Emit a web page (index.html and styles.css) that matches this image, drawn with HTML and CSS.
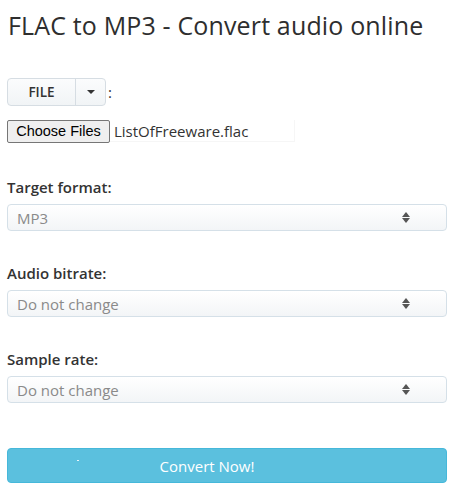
FILE: index.html
```html
<!DOCTYPE html>
<html>
<head>
<meta charset="utf-8">
<link rel="stylesheet" href="styles.css">
</head>
<body>
<div class="page">
  <h1 class="title">FLAC to MP3 - Convert audio online</h1>
  <div class="source-row">
    <div class="btn-group">
      <span class="btn-main">FILE</span>
      <span class="btn-caret"><span class="caret"></span></span>
    </div>
    <span class="colon">:</span>
  </div>
  <div class="file-row">
    <span class="choose">Choose Files</span>
    <span class="file-name">ListOfFreeware.flac</span>
  </div>
  <div class="field first">
    <div class="label">Target format:</div>
    <div class="select"><span class="sel-text">MP3</span><span class="arrows"><span class="up"></span><span class="down"></span></span></div>
  </div>
  <div class="field">
    <div class="label">Audio bitrate:</div>
    <div class="select"><span class="sel-text">Do not change</span><span class="arrows"><span class="up"></span><span class="down"></span></span></div>
  </div>
  <div class="field">
    <div class="label">Sample rate:</div>
    <div class="select"><span class="sel-text">Do not change</span><span class="arrows"><span class="up"></span><span class="down"></span></span></div>
  </div>
  <div class="convert"><span class="dot"></span>Convert Now!</div>
</div>
</body>
</html>
```
FILE: styles.css
```css
html, body { margin: 0; padding: 0; background: #fff; }
body { font-family: "Open Sans", "DejaVu Sans", sans-serif; color: #333; }
.page { width: 440px; padding: 0 0 0 7px; }
.title {
  margin: 0; padding-top: 8px;
  font-size: 25px; font-weight: 400; line-height: 34px;
  color: #2e2e2e; padding-left: 1px; letter-spacing: 0.15px;
}
.source-row { display: flex; align-items: center; margin-top: 36px; height: 28px; }
.btn-group {
  display: flex; height: 28px; box-sizing: border-box;
  border: 1px solid #d6dde3; border-radius: 4px;
  background: linear-gradient(#fbfcfd, #f1f4f6);
}
.btn-main {
  width: 67px; display: flex; align-items: center; justify-content: center;
  font-size: 13.5px; font-weight: 600; color: #333;
  border-right: 1px solid #d6dde3;
}
.btn-caret { width: 29px; display: flex; align-items: center; justify-content: center; }
.caret { width: 0; height: 0; border-left: 4px solid transparent; border-right: 4px solid transparent; border-top: 4px solid #333; }
.colon { margin-left: 2px; font-size: 15px; color: #333; }
.file-row { display: flex; align-items: center; margin-top: 13px; height: 24px; }
.choose {
  box-sizing: border-box; height: 23px; width: 103px;
  display: flex; align-items: center; justify-content: center;
  font-family: "Liberation Sans", Arial, sans-serif; font-size: 14.5px; color: #000;
  background: #efefef; border: 1px solid #767676; border-radius: 2px;
}
.file-name {
  box-sizing: border-box; height: 22px; width: 185px;
  display: flex; align-items: center; padding-left: 4px;
  font-size: 15px; color: #333;
  border-right: 1px solid #f6f6f6; border-bottom: 1px solid #f6f6f6;
}
.field { margin-top: 32px; }
.field.first { margin-top: 34px; }
.label { font-size: 15px; font-weight: 600; color: #333; line-height: 20px; margin-bottom: 7px; }
.select {
  box-sizing: border-box; width: 440px; height: 27px;
  border: 1px solid #d5e0e8; border-radius: 4px;
  background: linear-gradient(#ffffff, #f3f5f7);
  display: flex; align-items: center; justify-content: space-between;
  padding: 0 36px 0 9px;
}
.sel-text { font-size: 15px; color: #8a8a8a; }
.arrows { display: flex; flex-direction: column; gap: 1px; }
.up { width: 0; height: 0; border-left: 4px solid transparent; border-right: 4px solid transparent; border-bottom: 5px solid #555; }
.down { width: 0; height: 0; border-left: 4px solid transparent; border-right: 4px solid transparent; border-top: 5px solid #555; }
.convert {
  position: relative;
  box-sizing: border-box; width: 440px; height: 35px; margin-top: 45px;
  background: #5bc0de; border: 1px solid #46b8da; border-radius: 4px;
  color: #fff; font-size: 15px;
  display: flex; align-items: center; justify-content: center;
  padding-right: 40px;
}
.dot { position: absolute; left: 69px; top: 11px; width: 2px; height: 1px; background: #e8f6fb; }
```
